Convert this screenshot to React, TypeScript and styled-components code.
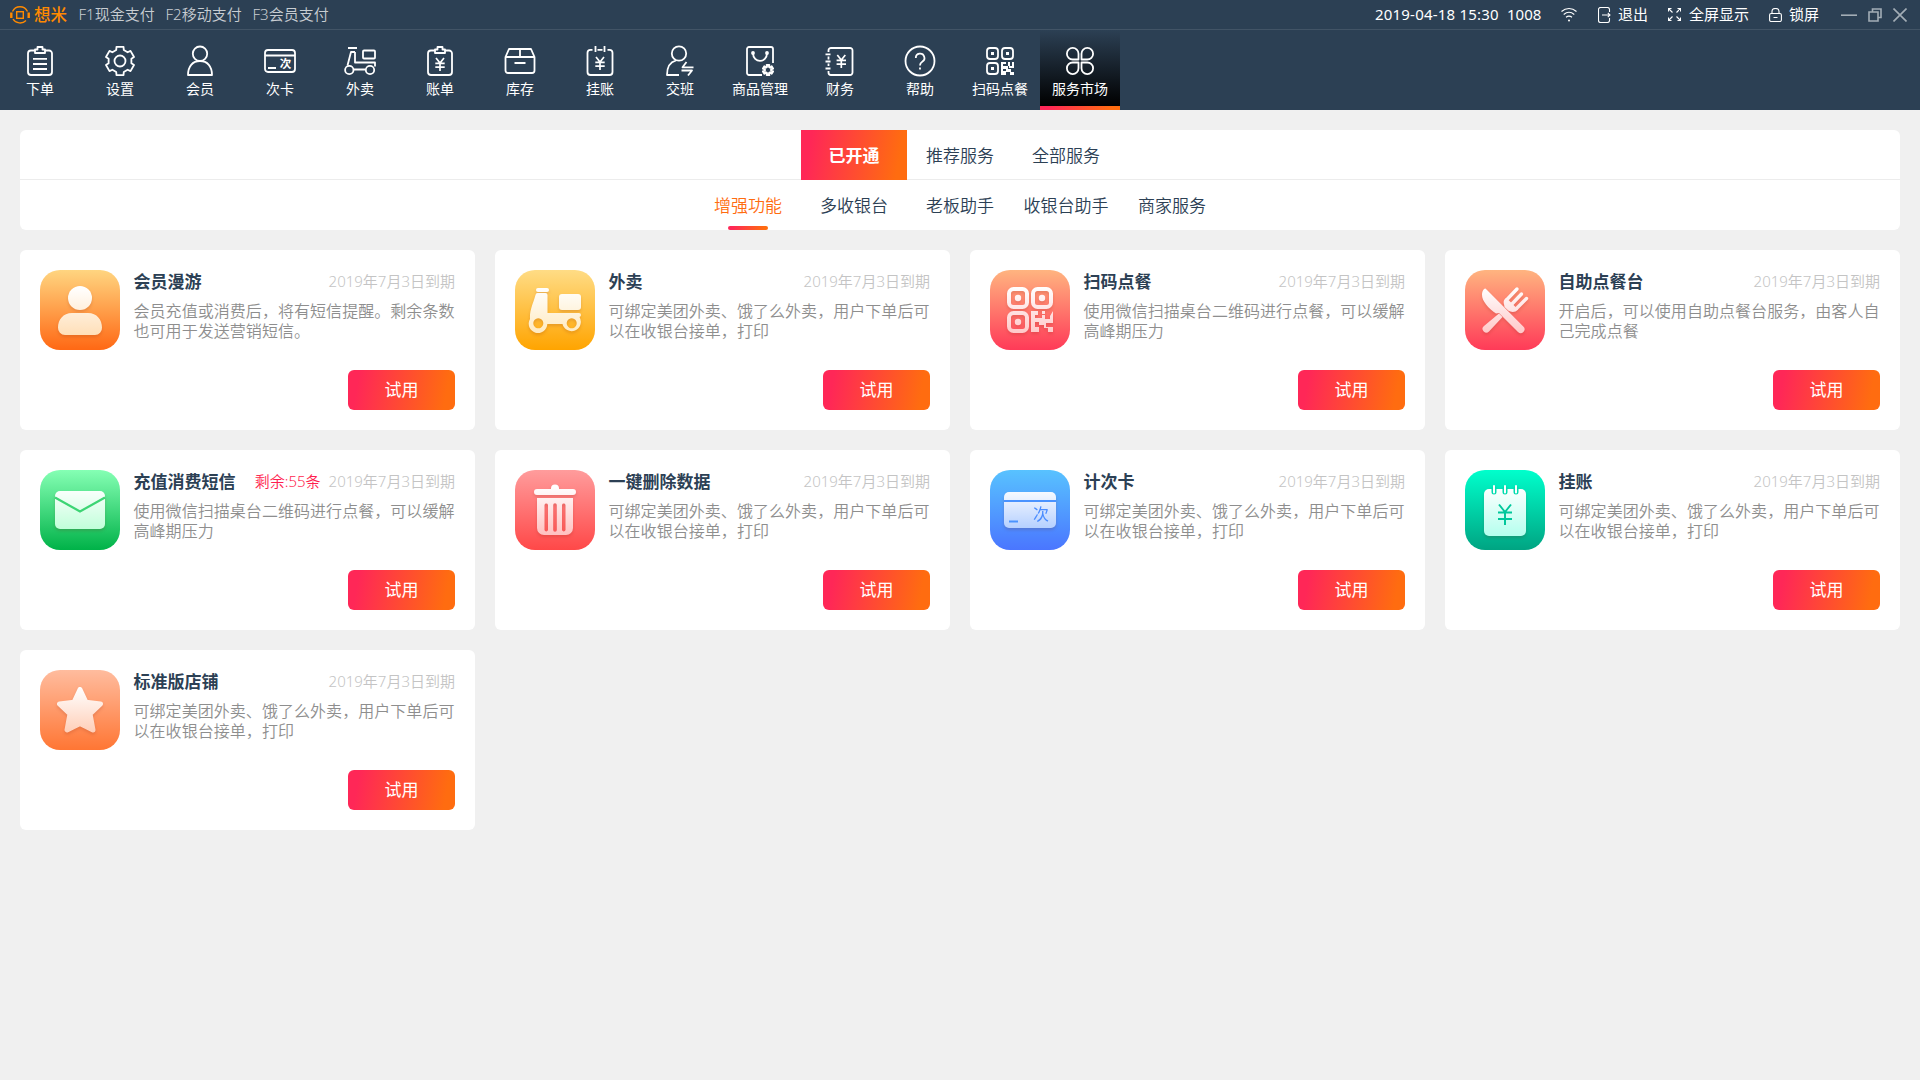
import React from "react";
import styled, { createGlobalStyle } from "styled-components";

const FONT = '"Noto Sans", "Noto Sans CJK SC", sans-serif';
const ACCENT = "linear-gradient(100deg, #ff2757 10%, #ff6c10 90%)";

const GlobalStyle = createGlobalStyle`
  * { box-sizing: border-box; }
  body {
    margin: 0;
    background: #f0f0f0;
    font-family: ${FONT};
    font-weight: 400;
    color: #2c4054;
  }
`;

const Page = styled.div`
  display: flex;
  flex-direction: column;
  width: 1920px;
  height: 1080px;
  background: #f0f0f0;
  overflow: hidden;
`;

const TitleBar = styled.header`
  display: flex;
  align-items: center;
  height: 30px;
  padding: 0 13px 0 10px;
  background: #2c4054;
  border-bottom: 1px solid #425466;
  font-size: 15px;
  line-height: 26px;
  color: #fff;
  white-space: nowrap;
`;

const Brand = styled.div`
  display: flex;
  align-items: center;
  gap: 4px;
  width: 68.5px;
  color: #ff8a00;
  font-size: 16.5px;
  font-weight: 500;
`;

const Shortcut = styled.span`
  width: 87px;
  height: 28px;
  color: #c8cdd2;
  font-weight: 350;
`;

const Spacer = styled.div`
  flex: 1;
`;

const Clock = styled.span<{ $width: number; $spacing?: number }>`
  width: ${(p) => p.$width}px;
  height: 28px;
  letter-spacing: ${(p) => p.$spacing ?? 0}px;
`;

const BarAction = styled.span<{ $width: number; $gap?: number }>`
  display: flex;
  align-items: center;
  gap: ${(p) => p.$gap ?? 0}px;
  width: ${(p) => p.$width}px;
`;

const BarLabel = styled.span`
  height: 28px;
`;

const WindowButtons = styled.div`
  display: flex;
  align-items: center;
  gap: 11px;
  color: #a3adb6;
`;

const NavBar = styled.nav`
  display: flex;
  height: 80px;
  background: #2c4054;
`;

const NavItem = styled.a<{ $active?: boolean }>`
  display: flex;
  flex-direction: column;
  align-items: center;
  width: 80px;
  height: 80px;
  padding-top: 15px;
  font-size: 14px;
  line-height: 20px;
  color: #fff;
  white-space: nowrap;
  background: ${(p) =>
    p.$active
      ? `${ACCENT} bottom / 100% 4px no-repeat, linear-gradient(#2c4054, #000 76px)`
      : "none"};
`;

const NavLabel = styled.span`
  margin-top: 2px;
`;

const Main = styled.main`
  display: flex;
  flex-direction: column;
  gap: 20px;
  padding: 20px;
`;

const TabPanel = styled.section`
  background: #fff;
  border-radius: 6px;
`;

const TabRow = styled.div<{ $divided?: boolean }>`
  display: flex;
  justify-content: center;
  height: 50px;
  background: ${(p) =>
    p.$divided ? "linear-gradient(#ececec, #ececec) bottom / 100% 1px no-repeat" : "none"};
`;

const Tab = styled.a<{ $active?: boolean }>`
  width: 106px;
  height: 50px;
  font-size: 17px;
  line-height: 52px;
  text-align: center;
  white-space: nowrap;
  color: ${(p) => (p.$active ? "#fff" : "#2c4054")};
  font-weight: ${(p) => (p.$active ? 700 : 350)};
  background: ${(p) => (p.$active ? ACCENT : "none")};
`;

const SubTab = styled(Tab)`
  display: flex;
  flex-direction: column;
  align-items: center;
  font-weight: 350;
  color: ${(p) => (p.$active ? "#ff6c10" : "#2c4054")};
  background: none;
  &::after {
    content: "";
    flex: none;
    width: 40px;
    height: 4px;
    margin-top: -6px;
    border-radius: 2px;
    background: ${(p) => (p.$active ? ACCENT : "none")};
  }
`;

const CardGrid = styled.section`
  display: grid;
  grid-template-columns: repeat(4, 455px);
  grid-auto-rows: 180px;
  gap: 20px;
`;

const Card = styled.article`
  display: flex;
  gap: 13.5px;
  padding: 20px;
  background: #fff;
  border-radius: 6px;
`;

const Tile = styled.div<{ $from: string; $to: string }>`
  flex: none;
  width: 80px;
  height: 80px;
  border-radius: 20px;
  background: linear-gradient(${(p) => p.$from}, ${(p) => p.$to});
  svg {
    display: block;
    filter: drop-shadow(0 2px 1.5px rgba(120, 20, 0, 0.16));
  }
`;

const CardBody = styled.div`
  display: flex;
  flex-direction: column;
  width: 321.5px;
`;

const CardHead = styled.div`
  display: flex;
  align-items: flex-start;
  height: 24px;
  white-space: nowrap;
`;

const CardTitle = styled.h3`
  flex: 1;
  margin: 0;
  font-size: 17px;
  font-weight: 700;
  line-height: 24px;
`;

const Meta = styled.span<{ $alert?: boolean }>`
  margin-left: 8px;
  font-size: 15px;
  font-weight: 350;
  line-height: 22px;
  color: ${(p) => (p.$alert ? "#ff1f50" : "#c4c4c4")};
`;

const Description = styled.p`
  margin: 7px 0 29px;
  height: 40px;
  font-size: 16px;
  font-weight: 350;
  line-height: 20px;
  letter-spacing: 0.05px;
  color: #8e8e8e;
`;

const TryButton = styled.button`
  align-self: flex-end;
  width: 107px;
  height: 40px;
  padding: 0;
  border: 0;
  border-radius: 6px;
  background: ${ACCENT};
  color: #fff;
  font: 400 17px/40px ${FONT};
`;

/* Six-toothed cog outline around (cx, cy). */
const cog = (cx: number, cy: number, outer: number, inner: number) => {
  const points: string[] = [];
  for (let i = 0; i < 6; i++) {
    const mid = -90 + i * 60;
    [
      [-19, inner],
      [-14, outer],
      [14, outer],
      [19, inner],
    ].forEach(([offset, r]) => {
      const a = ((mid + offset) * Math.PI) / 180;
      points.push(`${(cx + r * Math.cos(a)).toFixed(2)} ${(cy + r * Math.sin(a)).toFixed(2)}`);
    });
  }
  return `M${points.join("L")}Z`;
};

const LineIcon = ({ children }: { children: React.ReactNode }) => (
  <svg width="32" height="32" viewBox="0 0 32 32" fill="none" stroke="#fff" strokeWidth="1.8" strokeLinejoin="round">
    {children}
  </svg>
);

const Yen = ({ x, y }: { x: number; y: number }) => (
  <path
    transform={`translate(${x} ${y})`}
    d="M-4-6.5 0-1.5 4-6.5M0-1.5V6.5M-4.7-1.2H4.7M-4.7 2.6H4.7"
    strokeWidth="1.7"
  />
);

const Clipboard = ({ children }: { children: React.ReactNode }) => (
  <LineIcon>
    <path d="M11 5.500H7a3 3 0 0 0-3 3V27a3 3 0 0 0 3 3H25a3 3 0 0 0 3-3V8.500a3 3 0 0 0-3-3H21" />
    <path d="M11 8V4.500H13.500V2H18.500V4.500H21V8Z" />
    {children}
  </LineIcon>
);

const nav: { label: string; icon: React.ReactNode }[] = [
  { label: "下单", icon: <Clipboard><path d="M9 13.800H23M9 19H23M9 24H23" /></Clipboard> },
  {
    label: "设置",
    icon: (
      <LineIcon>
        <path d={cog(16, 16, 14.6, 11.6)} />
        <circle cx="16" cy="16" r="5.500" />
      </LineIcon>
    ),
  },
  {
    label: "会员",
    icon: (
      <LineIcon>
        <circle cx="16" cy="8.700" r="7.200" />
        <path d="M4 30C4 21.500 8.500 16 16 16S28 21.500 28 30Z" />
      </LineIcon>
    ),
  },
  {
    label: "次卡",
    icon: (
      <LineIcon>
        <rect x="1" y="5" width="30" height="22" rx="3" />
        <path d="M1 10.500H31M4 23H12" />
        <text x="21.600" y="23" fontSize="11.500" fontWeight="700" textAnchor="middle" fill="#fff" stroke="none">次</text>
      </LineIcon>
    ),
  },
  {
    label: "外卖",
    icon: (
      <LineIcon>
        <rect x="19" y="5.500" width="12" height="8" rx="1" />
        <path d="M4 3H13M11 7V17.500H31V21.500M11 7H7L3.500 20.500M9.500 24.500H21.500" />
        <circle cx="5.300" cy="25" r="4.200" />
        <circle cx="26" cy="25" r="4.200" />
      </LineIcon>
    ),
  },
  { label: "账单", icon: <Clipboard><Yen x={16} y={19.5} /></Clipboard> },
  {
    label: "库存",
    icon: (
      <LineIcon>
        <path d="M5 4H27L30.500 12V25.500a2.500 2.500 0 0 1-2.500 2.500H4a2.500 2.500 0 0 1-2.500-2.500V12ZM1.500 12H30.500M16 4V12M10.500 18H21.500" />
      </LineIcon>
    ),
  },
  {
    label: "挂账",
    icon: (
      <LineIcon>
        <path d="M8.500 4.800H6.500A3 3 0 0 0 3.500 7.800V27a3 3 0 0 0 3 3H25.500a3 3 0 0 0 3-3V7.800a3 3 0 0 0-3-3H23.500M11.500 1V7M20.500 1V7M13.500 4.800H18.500" />
        <Yen x={16} y={18.5} />
      </LineIcon>
    ),
  },
  {
    label: "交班",
    icon: (
      <LineIcon>
        <circle cx="15" cy="8.500" r="7.200" />
        <path d="M12 15.500C6 17 3 22 3 30H15M22.500 17 18.500 22.300H29.500M17.500 25.500H28L24 30.500" />
      </LineIcon>
    ),
  },
  {
    label: "商品管理",
    icon: (
      <LineIcon>
        <path d="M18 30H5a2 2 0 0 1-2-2V4a2 2 0 0 1 2-2H27a2 2 0 0 1 2 2V18M9 8C9 18.500 23 18.500 23 8" />
        <circle cx="9" cy="8" r="1" fill="#fff" />
        <circle cx="23" cy="8" r="1" fill="#fff" />
        <path d={cog(24, 25, 5.2, 3.2)} strokeWidth="2" />
      </LineIcon>
    ),
  },
  {
    label: "财务",
    icon: (
      <LineIcon>
        <path d="M4.500 7V5.500A2.500 2.500 0 0 1 7 3H26a2.500 2.500 0 0 1 2.500 2.500V27.500A2.500 2.500 0 0 1 26 30H7A2.500 2.500 0 0 1 4.500 27.500V26M4.500 11.500V14.500M4.500 18.500V21" />
        <path d="M1.500 9.300H6.500M1.500 16.500H6.500M1.500 23.500H6.500" />
        <Yen x={17.3} y={16.5} />
      </LineIcon>
    ),
  },
  {
    label: "帮助",
    icon: (
      <LineIcon>
        <circle cx="16" cy="16" r="14.500" />
        <path d="M11.800 13a4.300 4.300 0 1 1 6.400 3.700C16.500 17.700 16 18.400 16 20.500M16 22.500V24.500" />
      </LineIcon>
    ),
  },
  {
    label: "扫码点餐",
    icon: (
      <LineIcon>
        <rect x="3" y="3" width="11" height="11" rx="3" />
        <rect x="18" y="3" width="11" height="11" rx="3" />
        <rect x="3" y="18" width="11" height="11" rx="3" />
        <path d="M7 7h3v3h-3zM22 7h3v3h-3zM7 22h3v3h-3zM17 17h5v2h-3v2h3v3h-3v2h3v4h-5zM24 17h2v4h-2zM28 17h2v6h-5v-2h3zM22 21h2v3h3v3h3v3h-4v-3h-4z" fill="#fff" stroke="none" />
      </LineIcon>
    ),
  },
  {
    label: "服务市场",
    icon: (
      <LineIcon>
        <path d="M14.500 14.500H8.700A5.800 5.800 0 1 1 14.500 8.700ZM17.500 14.500H23.300A5.800 5.800 0 1 0 17.500 8.700ZM14.500 17.500H8.700A5.800 5.800 0 1 0 14.500 23.300ZM17.500 17.500H23.300A5.800 5.800 0 1 1 17.500 23.300Z" />
      </LineIcon>
    ),
  },
];

/* White glyph on a coloured tile, tinted towards its foot. */
const Glyph = ({ id, tint, children }: { id: string; tint: string; children: React.ReactNode }) => (
  <svg width="80" height="80" viewBox="0 0 80 80" fill={`url(#${id})`}>
    <defs>
      <linearGradient id={id} gradientUnits="userSpaceOnUse" x1="0" y1="17" x2="0" y2="65">
        <stop offset="0" stopColor="#fff" />
        <stop offset="1" stopColor={tint} />
      </linearGradient>
    </defs>
    {children}
  </svg>
);

type Service = {
  title: string;
  text: string;
  left?: string;
  from: string;
  to: string;
  glyph: React.ReactNode;
};

const TAKEOUT = "可绑定美团外卖、饿了么外卖，用户下单后可以在收银台接单，打印";
const SCAN = "使用微信扫描桌台二维码进行点餐，可以缓解高峰期压力";

const services: Service[] = [
  {
    title: "会员漫游",
    text: "会员充值或消费后，将有短信提醒。剩余条数也可用于发送营销短信。",
    from: "#ffd580",
    to: "#ff6814",
    glyph: (
      <Glyph id="g-member" tint="#ffdfb8">
        <circle cx="40" cy="28" r="12" />
        <path d="M32 43H48C57 43 62 50 62 57.500A7 7 0 0 1 55 65H25A7 7 0 0 1 18 57.500C18 50 23 43 32 43Z" />
      </Glyph>
    ),
  },
  {
    title: "外卖",
    text: TAKEOUT,
    from: "#ffdc85",
    to: "#ffa400",
    glyph: (
      <Glyph id="g-takeout" tint="#ffe9bd">
        <rect x="21" y="18" width="13" height="4" rx="2" />
        <rect x="44" y="24" width="22" height="16" rx="3" />
        <path
          fillRule="evenodd"
          d="M22.500 23H30.500a2 2 0 0 1 2 2V43H64a2 2 0 0 1 2 2 2 2 0 0 1-1.500 2 9.300 9.300 0 1 1-17 7H32.300a9.300 9.300 0 1 1-17.300-5C14.500 40 18 34 20.500 25a2.200 2.200 0 0 1 2-2ZM23.300 48.300a5 5 0 1 0 0.010 0ZM56.700 48.300a5 5 0 1 0 0.010 0Z"
        />
      </Glyph>
    ),
  },
  {
    title: "扫码点餐",
    text: SCAN,
    from: "#ffb480",
    to: "#ff3a58",
    glyph: (
      <Glyph id="g-scan" tint="#ffc6c6">
        <g fill="none" stroke="url(#g-scan)" strokeWidth="4">
          <rect x="19" y="19" width="18" height="18" rx="4.500" />
          <rect x="43" y="19" width="18" height="18" rx="4.500" />
          <rect x="19" y="43" width="18" height="18" rx="4.500" />
        </g>
        <circle cx="28" cy="28" r="3.200" />
        <circle cx="52" cy="28" r="3.200" />
        <circle cx="28" cy="52" r="3.200" />
        <path d="M42 41h6v4h-3v3h7v-3h3v4h5v-3l3-5v12h-7v4h7v5h-5v-4h-4v-3h-5v-3h-4v5h4v5h-8v-21zM52 41h3v3h-3z" />
      </Glyph>
    ),
  },
  {
    title: "自助点餐台",
    text: "开启后，可以使用自助点餐台服务，由客人自己完成点餐",
    from: "#ffb480",
    to: "#ff3a58",
    glyph: (
      <Glyph id="g-dine" tint="#ffc6c6">
        <path d="M20.500 18.500 58.300 56.500A3.700 3.700 0 0 1 53 62L37.500 46.500 34 43 31 43.500C22 37 15 29 17.500 21.500 18 20 19 18.500 20.500 18.500Z" />
        <path d="M34 43.500 37.500 47 24 61.500A3.700 3.700 0 0 1 18.700 56.200Z" />
        <path
          d="M52 19 42 29.500M56.500 24 47 34M61.500 28.500 51.500 38.500"
          fill="none"
          stroke="url(#g-dine)"
          strokeWidth="3.400"
          strokeLinecap="round"
        />
        <path d="M40.500 28.300 44 30.500 50 36.500 53 39.500C51 42 47.500 42.500 45.500 41.500L43.500 40.800 39.500 37 39.200 35C38.200 32.500 38.500 30 40.500 28.300Z" />
      </Glyph>
    ),
  },
  {
    title: "充值消费短信",
    text: SCAN,
    left: "剩余:55条",
    from: "#85ffb4",
    to: "#00b248",
    glyph: (
      <Glyph id="g-sms" tint="#b8ffd4">
        <rect x="15" y="21" width="50" height="38" rx="5" />
        <path d="M15 27.500 40 41.500 65 27.500" fill="none" stroke="#3dd574" strokeWidth="2.200" />
      </Glyph>
    ),
  },
  {
    title: "一键删除数据",
    text: TAKEOUT,
    from: "#ff9c9c",
    to: "#ff4848",
    glyph: (
      <Glyph id="g-delete" tint="#ffc0c0">
        <path d="M22 19H36V18.500a4 4 0 0 1 8 0V19H58a3 3 0 0 1 0 6H22a3 3 0 0 1 0-6Z" />
        <path
          fillRule="evenodd"
          d="M22 28H58V58a7 7 0 0 1-7 7H29a7 7 0 0 1-7-7ZM29.500 35V60a1.800 1.800 0 0 0 3.500 0V35a1.800 1.800 0 0 0-3.500 0ZM38.200 35V60a1.800 1.800 0 0 0 3.600 0V35a1.800 1.800 0 0 0-3.600 0ZM47 35V60a1.800 1.800 0 0 0 3.500 0V35a1.800 1.800 0 0 0-3.500 0Z"
        />
      </Glyph>
    ),
  },
  {
    title: "计次卡",
    text: TAKEOUT,
    from: "#58c2ff",
    to: "#4a76ff",
    glyph: (
      <Glyph id="g-card" tint="#a9c8ff">
        <rect x="14" y="22" width="52" height="36" rx="5" />
        <path d="M14 30H66V32H14ZM19 50.500H28V52.500H19Z" fill="#4a93ff" />
        <text x="51" y="50" fontSize="16" textAnchor="middle" fill="#4a8cff">次</text>
      </Glyph>
    ),
  },
  {
    title: "挂账",
    text: TAKEOUT,
    from: "#00ffcc",
    to: "#00a482",
    glyph: (
      <Glyph id="g-credit" tint="#b5ffee">
        <rect x="19" y="19" width="42" height="47" rx="5" />
        <g fill="none" stroke="#00dcae" strokeWidth="5" strokeLinecap="round">
          <path d="M29 18.500V22M40 18.500V22M51 18.500V22" />
        </g>
        <g fill="none" stroke="#fff" strokeWidth="2" strokeLinecap="round">
          <path d="M29 16V22.500M40 16V22.500M51 16V22.500" />
        </g>
        <path d="M34 34.500 40 42 46 34.500M40 42V55M33 42.500H47M33 49H47" fill="none" stroke="#00c79b" strokeWidth="2" />
      </Glyph>
    ),
  },
  {
    title: "标准版店铺",
    text: TAKEOUT,
    from: "#ffbc9e",
    to: "#ff7634",
    glyph: (
      <Glyph id="g-shop" tint="#ffccb4">
        <path
          d="M40 19.500 46 32.200 60.500 34 50 43.800 53 60 40 53.500 27 60 30 43.800 19.500 34 34 32.200Z"
          stroke="url(#g-shop)"
          strokeWidth="5"
          strokeLinejoin="round"
        />
      </Glyph>
    ),
  },
];

export default function App() {
  return (
    <>
      <GlobalStyle />
      <Page>
        <TitleBar>
          <Brand>
            <svg width="20" height="20" viewBox="0 0 20 20" fill="none" stroke="#ff8a00" strokeWidth="1.400">
              <path d="M2.500 6.500A8.300 8.300 0 0 1 17.500 6.500M3 14A8.300 8.300 0 0 0 16 15.500" />
              <path d="M1.300 7.500V13M18.700 7.500V13" strokeWidth="2.400" />
              <rect x="6.700" y="6.700" width="6.600" height="6.600" />
            </svg>
            想米
          </Brand>
          <Shortcut>F1现金支付</Shortcut>
          <Shortcut>F2移动支付</Shortcut>
          <Shortcut>F3会员支付</Shortcut>
          <Spacer />
          <Clock $width={132} $spacing={0.2}>2019-04-18 15:30</Clock>
          <Clock $width={54}>1008</Clock>
          <BarAction $width={37}>
            <svg width="16" height="16" viewBox="0 0 16 16" fill="none" stroke="#fff" strokeWidth="1.100">
              <path d="M0.500 4.500C5 0.500 11 0.500 15.500 4.500M2.700 7.500C6 4.700 10 4.700 13.300 7.500M5 10.300C7 8.800 9 8.800 11 10.300" />
              <circle cx="8" cy="13.500" r="1" fill="#fff" stroke="none" />
            </svg>
          </BarAction>
          <BarAction $width={70} $gap={7}>
            <svg width="13" height="16" viewBox="0 0 13 16" fill="none" stroke="#fff" strokeWidth="1.100">
              <path d="M11.500 5V2.500a2 2 0 0 0-2-2H2.500a2 2 0 0 0-2 2V13.500a2 2 0 0 0 2 2H9.500a2 2 0 0 0 2-2V11M4 8H12M9.800 5.800 12 8 9.800 10.200" />
            </svg>
            <BarLabel>退出</BarLabel>
          </BarAction>
          <BarAction $width={101} $gap={8}>
            <svg width="13" height="13" viewBox="0 0 13 13" fill="none" stroke="#fff" strokeWidth="1.100">
              <path d="M0.500 3.500V0.500H3.500M0.500 0.500 4.500 4.500M9.500 0.500H12.500V3.500M12.500 0.500 8.500 4.500M0.500 9.500V12.500H3.500M0.500 12.500 4.500 8.500M9.500 12.500H12.500V9.500M12.500 12.500 8.500 8.500" />
            </svg>
            <BarLabel>全屏显示</BarLabel>
          </BarAction>
          <BarAction $width={72} $gap={7}>
            <svg width="13" height="14" viewBox="0 0 13 14" fill="none" stroke="#fff" strokeWidth="1.100">
              <rect x="0.600" y="5.500" width="11.800" height="8" rx="1.500" />
              <path d="M3 5.500V3.500a3.500 3 0 0 1 7 0V5.500M4.500 9.500H8.500" />
            </svg>
            <BarLabel>锁屏</BarLabel>
          </BarAction>
          <WindowButtons>
            <svg width="16" height="14" viewBox="0 0 16 14" stroke="currentColor" strokeWidth="1.600">
              <path d="M0 7.200H16" />
            </svg>
            <svg width="14" height="14" viewBox="0 0 14 14" fill="none" stroke="currentColor" strokeWidth="1.600">
              <path d="M1 4H10V13H1ZM4.500 4V1H13V9.500H10" />
            </svg>
            <svg width="14" height="14" viewBox="0 0 14 14" stroke="currentColor" strokeWidth="1.600">
              <path d="M0.500 0.500 13.500 13.500M13.500 0.500 0.500 13.500" />
            </svg>
          </WindowButtons>
        </TitleBar>

        <NavBar>
          {nav.map((item) => (
            <NavItem key={item.label} $active={item.label === "服务市场"}>
              {item.icon}
              <NavLabel>{item.label}</NavLabel>
            </NavItem>
          ))}
        </NavBar>

        <Main>
          <TabPanel>
            <TabRow $divided>
              {["已开通", "推荐服务", "全部服务"].map((label, i) => (
                <Tab key={label} $active={i === 0}>{label}</Tab>
              ))}
            </TabRow>
            <TabRow>
              {["增强功能", "多收银台", "老板助手", "收银台助手", "商家服务"].map((label, i) => (
                <SubTab key={label} $active={i === 0}>{label}</SubTab>
              ))}
            </TabRow>
          </TabPanel>

          <CardGrid>
            {services.map((s) => (
              <Card key={s.title}>
                <Tile $from={s.from} $to={s.to}>{s.glyph}</Tile>
                <CardBody>
                  <CardHead>
                    <CardTitle>{s.title}</CardTitle>
                    {s.left && <Meta $alert>{s.left}</Meta>}
                    <Meta>2019年7月3日到期</Meta>
                  </CardHead>
                  <Description>{s.text}</Description>
                  <TryButton>试用</TryButton>
                </CardBody>
              </Card>
            ))}
          </CardGrid>
        </Main>
      </Page>
    </>
  );
}
